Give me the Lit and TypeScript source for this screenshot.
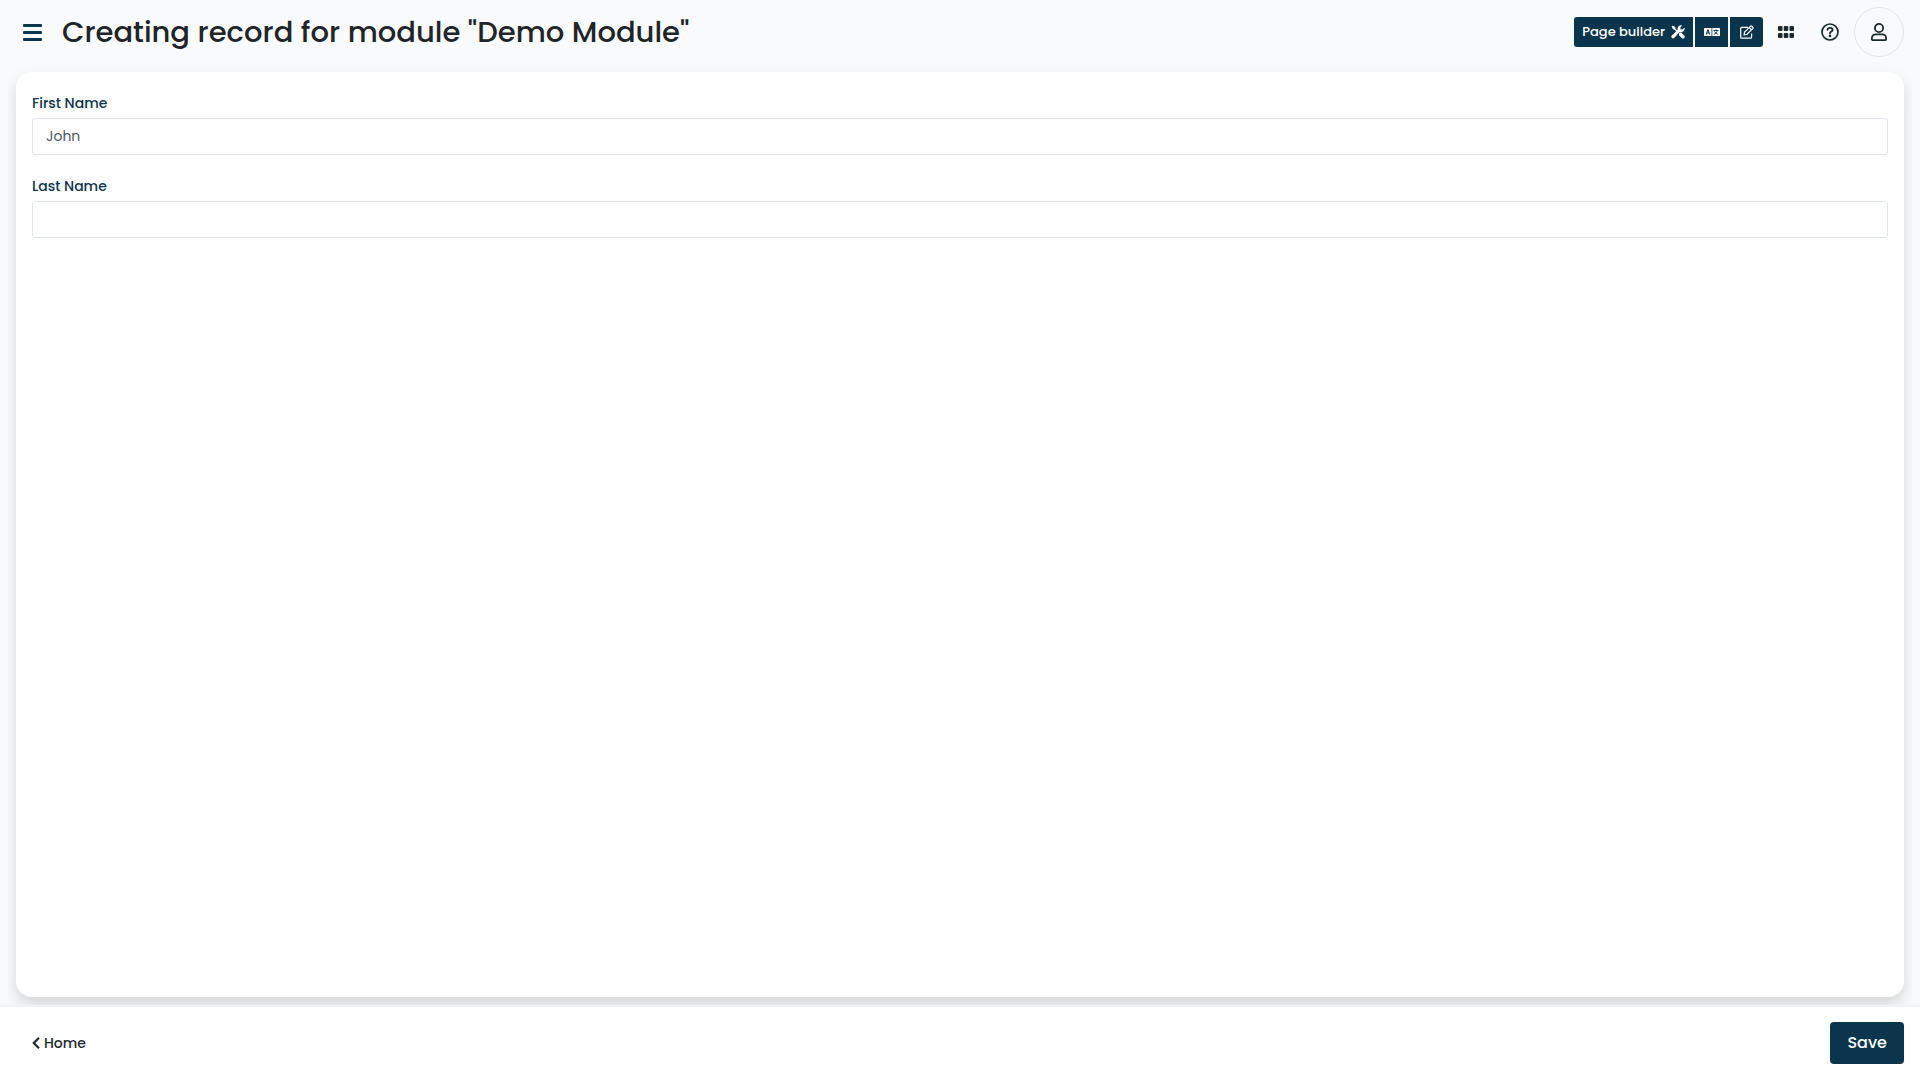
import { LitElement, html, css } from "lit";
import { customElement, state } from "lit/decorators.js";

@customElement("app-root")
export class AppRoot extends LitElement {
  @state() private firstName = "John";
  @state() private lastName = "";

  static styles = css`
    :host {
      display: flex;
      flex-direction: column;
      min-height: 100vh;
      box-sizing: border-box;
      background: #f9fafc;
      color: #212529;
      font-family: Poppins, Inter, "Noto Sans", sans-serif;
      font-size: 14px;
      line-height: 20px;
    }
    * { box-sizing: border-box; }
    svg { display: block; fill: currentColor; }
    button, input { font: inherit; margin: 0; }
    button {
      display: flex;
      align-items: center;
      justify-content: center;
      padding: 0;
      border: 0;
      background: none;
      color: inherit;
      cursor: pointer;
    }
    header {
      display: flex;
      align-items: center;
      height: 64px;
      padding: 0 16px;
    }
    .menu { width: 33px; height: 32px; color: #0b344d; }
    h1 {
      flex: 1;
      margin: 0;
      padding-left: 13px;
      font-size: 29px;
      line-height: 36px;
      font-weight: 500;
    }
    .actions { display: flex; align-items: center; color: #1a2a2d; }
    .group { display: flex; gap: 2px; margin-right: 7px; }
    .group button {
      height: 30px;
      width: 33px;
      background: #0b344d;
      color: #fff;
      font-size: 13px;
      font-weight: 500;
    }
    .group .builder {
      width: auto;
      padding: 0 8px;
      gap: 6px;
      border-radius: 3px 0 0 3px;
    }
    .group .edit { border-radius: 0 3px 3px 0; }
    .tool { width: 32px; height: 32px; }
    .help { margin: 0 8px 0 12px; }
    .avatar {
      width: 50px;
      height: 50px;
      border: 1px solid #e3e5e8;
      border-radius: 50%;
    }
    main {
      flex: 1;
      display: flex;
      margin: 0 8px;
      padding: 8px;
      overflow: hidden;
    }
    form {
      flex: 1;
      display: flex;
      flex-direction: column;
      gap: 21px;
      padding: 21px 16px;
      border-radius: 16px;
      background: #fff;
      box-shadow: 0 8px 16px rgba(0, 0, 0, 0.15);
    }
    .field { display: flex; flex-direction: column; gap: 5px; }
    label { color: #0b344d; font-weight: 500; }
    input {
      width: 100%;
      height: 37px;
      padding: 0 13px;
      border: 1px solid #dfe4ec;
      border-radius: 3px;
      outline: 0;
      background: #fff;
      color: #505968;
    }
    footer {
      display: flex;
      align-items: center;
      justify-content: space-between;
      height: 75px;
      padding: 0 16px 1px;
      border-top: 2px solid #f0f1f3;
      background: #fff;
    }
    a {
      display: flex;
      align-items: center;
      gap: 4px;
      padding: 8px 16px;
      color: #1a2a2d;
      font-weight: 500;
      text-decoration: none;
    }
    .save {
      height: 42px;
      padding: 0 17px;
      border-radius: 4px;
      background: #0b344d;
      color: #fff;
      font-size: 16px;
      font-weight: 500;
    }
  `;

  render() {
    return html`
      <header>
        <button class="menu" aria-label="Menu">
          <svg width="19" height="17" viewBox="0 0 19 17"><rect width="19" height="3" rx="1"/><rect y="7" width="19" height="3" rx="1"/><rect y="14" width="19" height="3" rx="1"/></svg>
        </button>
        <h1>Creating record for module "Demo Module"</h1>
        <div class="actions">
          <div class="group">
            <button class="builder">
              Page builder
              <svg width="14" height="14" viewBox="0 0 14 14"><path d="M.6 1.600 1.600.6l2.600 1.500.2 1.400 2.400 2.400-1 1L3.400 4.500 2 4.200Z"/><path d="m8 8.300 1.200-.9 1.300.3 2.700 2.700a1.600 1.600 0 0 1-2.500 2.500L8 10.200Z"/><path d="M13.500 2.700a3.600 3.600 0 0 1-4.800 4.300L3.200 12.900a1.700 1.700 0 0 1-2.400-2.400L6.700 5a3.600 3.600 0 0 1 4.500-4.600L9.300 2.500l.3 1.800 1.800.3Z"/></svg>
            </button>
            <button aria-label="Translations">
              <svg width="16" height="8" viewBox="0 0 16 8"><path fill-rule="evenodd" d="M.8 0h6.700v8H.8A.8.8 0 0 1 0 7.200V.8A.8.8 0 0 1 .8 0ZM3.400 1.500 1.600 6.500h1.100l.3-1h1.800l.3 1h1.100L4.500 1.500Zm-.1 3.100.6-1.700.6 1.700ZM8.300 0h6.900a.8.8 0 0 1 .8.8v6.400a.8.8 0 0 1-.8.8H8.300Z"/><path fill="none" stroke="#0b344d" stroke-width=".9" d="M9.500 2.500h5M12 1.300v1.200M13.500 2.600Q12.700 5.300 9.800 6.500M10.600 3.500q.9 2 3.500 3"/></svg>
            </button>
            <button class="edit" aria-label="Edit">
              <svg width="14" height="14" viewBox="0 0 14 14"><g fill="none" stroke="currentColor" stroke-width="1.200"><path d="M8 2.300H1.700a1 1 0 0 0-1 1v8.900a1 1 0 0 0 1 1h8.900a1 1 0 0 0 1-1V8.500"/><path d="m4.500 7.200 5.900-5.900a1 1 0 0 1 1.400 0l.9.900a1 1 0 0 1 0 1.400L6.800 9.500l-2.700.4ZM9.200 2.500l2.300 2.300"/></g></svg>
            </button>
          </div>
          <button class="tool" aria-label="Applications">
            <svg width="16" height="12" viewBox="0 0 16 12"><rect width="4.500" height="5" rx="1"/><rect x="5.750" width="4.500" height="5" rx="1"/><rect x="11.500" width="4.500" height="5" rx="1"/><rect y="7" width="4.500" height="5" rx="1"/><rect x="5.750" y="7" width="4.500" height="5" rx="1"/><rect x="11.500" y="7" width="4.500" height="5" rx="1"/></svg>
          </button>
          <button class="tool help" aria-label="Help">
            <svg width="18" height="18" viewBox="0 0 18 18"><circle cx="9" cy="9" r="8" fill="none" stroke="currentColor" stroke-width="1.700"/><path fill="none" stroke="currentColor" stroke-width="1.900" stroke-linecap="round" d="M6.500 6.700c.2-1.200 1-1.800 2.500-1.800 1.600 0 2.600.8 2.600 2C11.600 8.500 9 8.500 9 10.200"/><circle cx="9" cy="12.900" r="1.300"/></svg>
          </button>
          <button class="avatar" aria-label="Account">
            <svg width="16" height="18" viewBox="0 0 16 18"><g fill="none" stroke="currentColor" stroke-width="1.800"><circle cx="8" cy="5" r="4.100"/><path d="M4.600 11.400h6.800a3.700 3.700 0 0 1 3.700 3.700v1.200a.9.900 0 0 1-.9.900H1.800a.9.900 0 0 1-.9-.9v-1.200a3.700 3.700 0 0 1 3.700-3.700Z"/></g></svg>
          </button>
        </div>
      </header>
      <main>
        <form id="record" @submit=${(e: Event) => e.preventDefault()}>
          <div class="field">
            <label for="first">First Name</label>
            <input id="first" type="text" .value=${this.firstName} @input=${(e: Event) => (this.firstName = (e.target as HTMLInputElement).value)} />
          </div>
          <div class="field">
            <label for="last">Last Name</label>
            <input id="last" type="text" .value=${this.lastName} @input=${(e: Event) => (this.lastName = (e.target as HTMLInputElement).value)} />
          </div>
        </form>
      </main>
      <footer>
        <a href="#">
          <svg width="8" height="12" viewBox="0 0 8 12"><path fill="none" stroke="currentColor" stroke-width="2.200" d="M7 .8 1.800 6 7 11.200"/></svg>
          Home
        </a>
        <button class="save" type="submit" form="record">Save</button>
      </footer>
    `;
  }
}
